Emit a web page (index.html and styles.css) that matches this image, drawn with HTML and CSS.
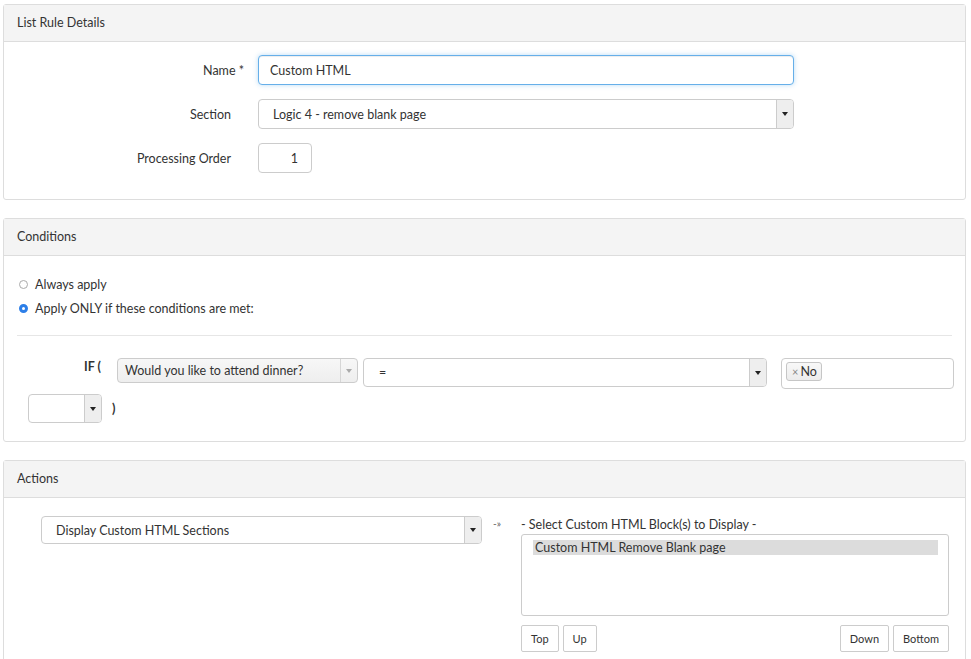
FILE: index.html
```html
<!DOCTYPE html>
<html lang="en">
  <head>
    <meta charset="UTF-8" />
    <title>List Rule Details</title>
    <link rel="stylesheet" href="styles.css">
  </head>
  <body>
    <div class="page">
      <!-- Rule name, section and ordering -->
      <section class="panel">
        <div class="panel-heading">List Rule Details</div>
        <div class="panel-body details">
          <div class="form-row">
            <label class="form-label">Name <span class="req">*</span></label>
            <input class="text-input focused" type="text" value="Custom HTML" />
          </div>
          <div class="form-row">
            <label class="form-label">Section</label>
            <div class="select wide">
              <span class="select-value">Logic 4 - remove blank page</span>
              <span class="select-arrow"></span>
            </div>
          </div>
          <div class="form-row">
            <label class="form-label">Processing Order</label>
            <input class="text-input order" type="text" value="1" />
          </div>
        </div>
      </section>

      <!-- When the rule applies -->
      <section class="panel">
        <div class="panel-heading">Conditions</div>
        <div class="panel-body conditions">
          <div class="radio-row">
            <span class="radio"></span>
            <span>Always apply</span>
          </div>
          <div class="radio-row">
            <span class="radio checked"></span>
            <span>Apply ONLY if these conditions are met:</span>
          </div>
          <hr class="divider" />
          <div class="cond-row">
            <span class="if-label">IF (</span>
            <div class="select question">
              <span class="select-value">Would you like to attend dinner?</span>
              <span class="select-arrow muted"></span>
            </div>
            <div class="select operator">
              <span class="select-value">=</span>
              <span class="select-arrow"></span>
            </div>
            <div class="multi">
              <span class="tag"><span class="tag-x">×</span>No</span>
            </div>
          </div>
          <div class="cond-row second">
            <div class="select joiner">
              <span class="select-value"></span>
              <span class="select-arrow"></span>
            </div>
            <span class="close-paren">)</span>
          </div>
        </div>
      </section>

      <!-- What the rule does -->
      <section class="panel">
        <div class="panel-heading">Actions</div>
        <div class="panel-body actions">
          <div class="select action">
            <span class="select-value">Display Custom HTML Sections</span>
            <span class="select-arrow"></span>
          </div>
          <span class="flow-arrow">-»</span>
          <div class="picker">
            <div class="picker-label">- Select Custom HTML Block(s) to Display -</div>
            <div class="listbox">
              <div class="option selected">Custom HTML Remove Blank page</div>
            </div>
            <div class="picker-buttons">
              <div class="btn-group">
                <button class="btn">Top</button>
                <button class="btn">Up</button>
              </div>
              <div class="btn-group">
                <button class="btn">Down</button>
                <button class="btn">Bottom</button>
              </div>
            </div>
          </div>
        </div>
      </section>
    </div>
  </body>
</html>
```

FILE: styles.css
```css
body {
  margin: 0;
  font-family: Lato, "Open Sans", Arial, sans-serif;
  font-size: 12.5px;
  color: #333;
  background-color: #fff;
}

.page {
  padding: 4px 5px 0 3px;
}

.panel {
  border: 1px solid #ddd;
  border-radius: 3px;
  margin-bottom: 18px;
  background-color: #fff;
}

.panel-heading {
  background-color: #f4f4f4;
  border-bottom: 1px solid #ddd;
  padding: 10px 13px;
  line-height: 16px;
}

/* details panel */
.details {
  padding: 13px 0 26px;
}

.form-row {
  display: flex;
  align-items: center;
  margin-bottom: 14px;
}

.form-row:last-child {
  margin-bottom: 0;
}

.form-label {
  width: 227px;
  text-align: right;
  margin-right: 27px;
}

.req {
  margin-right: -13px;
}

.text-input {
  font: inherit;
  color: #333;
  height: 30px;
  box-sizing: border-box;
  border: 1px solid #ccc;
  border-radius: 4px;
  padding: 0 11px;
  outline: none;
}

.text-input.focused {
  width: 536px;
  border-color: #66afe9;
  box-shadow: inset 0 1px 1px rgba(0, 0, 0, 0.075), 0 0 5px rgba(102, 175, 233, 0.45);
}

.text-input.order {
  width: 54px;
  text-align: right;
  padding-right: 13px;
}

/* select-like widgets */
.select {
  display: flex;
  box-sizing: border-box;
  border: 1px solid #ccc;
  border-radius: 4px;
  background-color: #fff;
  overflow: hidden;
}

.select-value {
  flex: 1;
  align-self: center;
  padding-left: 14px;
  white-space: nowrap;
}

.select-arrow {
  width: 16px;
  border-left: 1px solid #ccc;
  background-color: #eee;
  position: relative;
}

.select-arrow::after {
  content: "";
  position: absolute;
  left: 50%;
  top: 50%;
  margin: -2px 0 0 -3px;
  border-left: 3px solid transparent;
  border-right: 3px solid transparent;
  border-top: 4px solid #222;
}

.select-arrow.muted {
  background-color: transparent;
  border-left-color: #d6d6d6;
}

.select-arrow.muted::after {
  border-top-color: #aaa;
}

.select.wide {
  width: 536px;
  height: 30px;
}

/* conditions panel */
.conditions {
  padding: 18px 0 18px;
}

.radio-row {
  display: flex;
  align-items: center;
  height: 20px;
  padding-left: 15px;
  margin-bottom: 4px;
}

.radio {
  width: 9px;
  height: 9px;
  box-sizing: border-box;
  border: 1px solid #aaa;
  border-radius: 50%;
  background-color: #fff;
  margin-right: 7px;
}

.radio.checked {
  border: 3px solid #2d7fe8;
  background-color: #fff;
}

.divider {
  border: 0;
  border-top: 1px solid #e6e6e6;
  margin: 17px 13px 22px;
}

.cond-row {
  display: flex;
  align-items: flex-start;
  padding-left: 80px;
}

.if-label {
  width: 33px;
  font-weight: bold;
  line-height: 17px;
}

.select.question {
  width: 241px;
  height: 25px;
  background: linear-gradient(#f7f7f7, #eee);
  margin-right: 5px;
}

.select.question .select-value {
  padding-left: 7px;
}

.select.operator {
  width: 404px;
  height: 29px;
  margin-right: 14px;
}

.select.operator .select-value {
  padding-left: 15px;
}

.multi {
  width: 173px;
  height: 31px;
  box-sizing: border-box;
  border: 1px solid #ccc;
  border-radius: 4px;
  padding: 3px 4px;
}

.tag {
  display: inline-flex;
  align-items: center;
  height: 19px;
  box-sizing: border-box;
  padding: 0 4px 0 5px;
  border: 1px solid #c6c6c6;
  border-radius: 3px;
  background: linear-gradient(#f8f8f8, #ececec);
}

.tag-x {
  color: #888;
  font-size: 11px;
  margin-right: 2px;
}

.cond-row.second {
  padding-left: 24px;
  margin-top: 5px;
  align-items: center;
}

.select.joiner {
  width: 74px;
  height: 29px;
}

.close-paren {
  font-weight: bold;
  margin-left: 10px;
}

/* actions panel */
.actions {
  display: flex;
  align-items: flex-start;
  padding: 18px 0 20px 37px;
}

.select.action {
  width: 441px;
  height: 28px;
}

.flow-arrow {
  width: 28px;
  margin-left: 11px;
  font-size: 10px;
  color: #555;
  line-height: 14px;
}

.picker {
  width: 428px;
}

.picker-label {
  line-height: 17px;
  margin-bottom: 1px;
}

.listbox {
  height: 82px;
  box-sizing: border-box;
  border: 1px solid #ccc;
  border-radius: 3px;
  padding: 5px 10px 0 11px;
}

.option {
  line-height: 15px;
  padding-left: 2px;
}

.option.selected {
  background-color: #dcdcdc;
}

.picker-buttons {
  display: flex;
  justify-content: space-between;
  margin-top: 9px;
}

.btn-group {
  display: flex;
  gap: 4px;
}

.btn {
  font-family: inherit;
  font-size: 11px;
  color: #333;
  height: 27px;
  padding: 0 9px;
  background-color: #fff;
  border: 1px solid #ccc;
  border-radius: 2px;
}
```
